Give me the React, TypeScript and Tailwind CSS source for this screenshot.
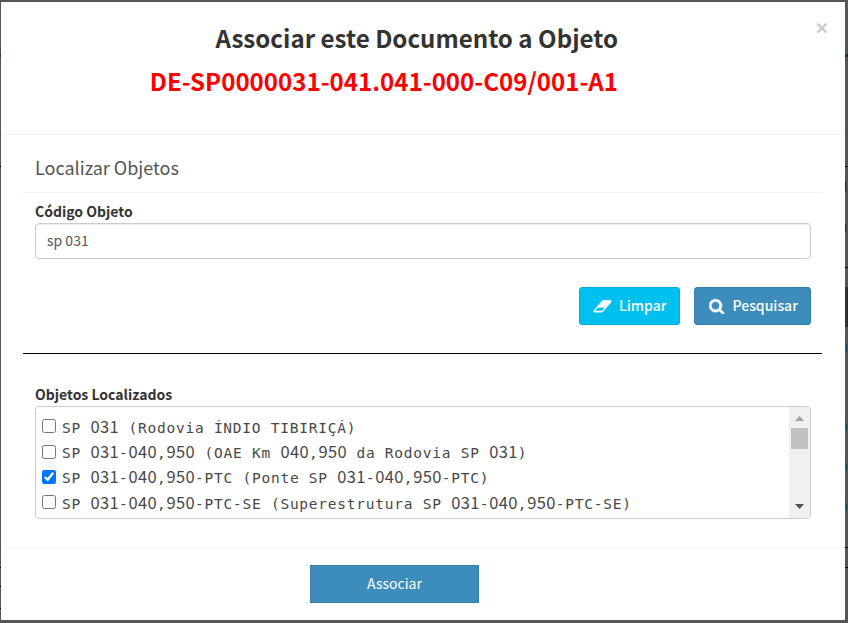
import React from "react";

type Objeto = { texto: string; marcado: boolean };

const objetos: Objeto[] = [
  { texto: "SP 031 (Rodovia ÍNDIO TIBIRIÇÁ)", marcado: false },
  { texto: "SP 031-040,950 (OAE Km 040,950 da Rodovia SP 031)", marcado: false },
  { texto: "SP 031-040,950-PTC (Ponte SP 031-040,950-PTC)", marcado: true },
  { texto: "SP 031-040,950-PTC-SE (Superestrutura SP 031-040,950-PTC-SE)", marcado: false },
];

/* Digits use a plain-zero face, spaced to the same pitch as the monospace letters. */
function TextoMono({ texto }: { texto: string }) {
  return (
    <span className="whitespace-pre font-['DejaVu_Sans_Mono',monospace] text-[14.5px] leading-[20px] tracking-[0.76px] text-[#484848]">
      {texto.split(/(\d+)/).map((parte, i) =>
        /^\d/.test(parte) ? (
          <span key={i} className="font-['Noto_Sans_CJK_SC',sans-serif] text-[16.5px] leading-[16px] tracking-[0.34px]">
            {parte}
          </span>
        ) : (
          parte
        )
      )}
    </span>
  );
}

function IconeBorracha() {
  return (
    <svg viewBox="0 0 2048 1792" className="h-[16.5px] w-[19px]" fill="currentColor" stroke="currentColor" strokeWidth="40">
      <path d="M960 1408l336-384h-768l-336 384h768zm1013-1077q15 34 9.5 71.5t-30.5 65.5l-896 1024q-38 44-96 44h-768q-38 0-69.5-20.5t-47.5-54.5q-15-34-9.5-71.5t30.5-65.5l896-1024q38-44 96-44h768q38 0 69.5 20.5t47.5 54.5z" />
    </svg>
  );
}

function IconeLupa() {
  return (
    <svg viewBox="0 0 1792 1792" className="size-[16.5px]" fill="currentColor" stroke="currentColor" strokeWidth="50">
      <path d="M1152 832q0-185-131.5-316.5t-316.5-131.5-316.5 131.5-131.5 316.5 131.5 316.5 316.5 131.5 316.5-131.5 131.5-316.5zm512 832q0 52-38 90t-90 38q-54 0-90-38l-343-342q-179 124-399 124-143 0-273.5-55.5t-225-150-150-225-55.5-273.5 55.5-273.5 150-225 225-150 273.5-55.5 273.5 55.5 225 150 150 225 55.5 273.5q0 220-124 399l343 343q37 37 37 90z" />
    </svg>
  );
}

function BarraRolagem() {
  return (
    <div className="flex w-[21px] flex-col items-center rounded-r-[3px] bg-[#f0f0f0]">
      <svg viewBox="0 0 9 5" className="mt-[9px] h-[5px] w-[9px] shrink-0" fill="#a3a3a3">
        <path d="M4.5 0L9 5H0z" />
      </svg>
      <div className="mt-[7px] h-[21px] w-[17px] bg-[#c1c1c1]" />
      <svg viewBox="0 0 9 5" className="mt-auto mb-[9px] h-[5px] w-[9px] shrink-0" fill="#505050">
        <path d="M0 0H9L4.5 5z" />
      </svg>
    </div>
  );
}

function BordaEsquerda() {
  return (
    <div className="w-px shrink-0">
      <div className="mt-[52px] h-[3px] bg-[#143c57]" />
      <div className="mt-[109px] h-px bg-black" />
      <div className="mt-[400px] h-px bg-black" />
      <div className="mt-[18px] h-px bg-black" />
      <div className="mt-[21px] h-px bg-black" />
    </div>
  );
}

function BordaDireita() {
  return (
    <div className="w-[3px] shrink-0 overflow-hidden">
      <div className="mt-[52px] h-[3px] bg-[#0c3a5c]" />
      <div className="mt-[109px] h-px bg-black" />
      <div className="mt-[14px] h-[11px] w-[2px] rounded-l-full border-l border-[#222]" />
      <div className="mt-[32px] h-[8px] w-[2px] rounded-l-full border-l border-[#222]" />
      <div className="mt-[35px] h-px bg-black" />
      <div className="mt-[19px] h-[40px] bg-[#303030]" />
      <div className="mt-[16px] h-[9px] w-[2px] rounded-r-full border-r border-[#143c57]" />
      <div className="mt-[71px] h-[8px] w-[2px] rounded-r-full border-r border-[#143c57]" />
      <div className="mt-[32px] h-[8px] w-[2px] rounded-r-full border-r border-[#143c57]" />
      <div className="mt-[32px] h-[8px] w-[2px] rounded-r-full border-r border-[#143c57]" />
      <div className="mt-[36px] h-px bg-black" />
      <div className="mt-[19px] h-px bg-black" />
    </div>
  );
}

export default function App() {
  return (
    <div className="flex h-[623px] w-[848px] overflow-hidden bg-[#555] pt-[2px] font-['Noto_Sans_CJK_SC',sans-serif] text-[#333]">
      <BordaEsquerda />
      <div className="flex h-[618px] w-[844px] flex-col bg-white">
        <header className="flex h-[133px] shrink-0 border-b border-[#f4f4f4]">
          <div className="w-[617px] pt-[14px] text-right text-[24.1px] leading-[43px] font-bold">
            <h4 className="whitespace-nowrap">Associar este Documento a Objeto</h4>
            <h4 className="whitespace-nowrap text-[#f00]">DE-SP0000031-041.041-000-C09/001-A1</h4>
          </div>
          <button className="mt-[14px] ml-auto mr-[17px] h-[24px] font-['Liberation_Sans',sans-serif] text-[21px] leading-[24px] font-bold text-[#ccc]">
            ×
          </button>
        </header>

        <main className="flex h-[412px] shrink-0 flex-col pr-[23px] pl-[22px]">
          <h3 className="h-[58px] shrink-0 border-b border-[#f1f1f1] pl-[12px] pt-[18px] text-[18px] leading-[28px] text-[#555]">
            Localizar Objetos
          </h3>
          <section className="flex flex-col pr-[11px] pl-[12px]">
            <label className="mt-[8px] h-[22px] text-[14px] leading-[20px] font-bold">Código Objeto</label>
            <div className="h-[36px] rounded-[4px] border border-[#ccc] pl-[11px] text-[14px] leading-[32px] text-[#555] shadow-[inset_0_1px_1px_rgba(0,0,0,0.075)]">
              sp 031
            </div>
            <div className="mt-[28px] flex justify-end gap-[14px] text-[14px] leading-[20px] text-white">
              <button className="flex h-[38px] w-[101px] items-center rounded-[3px] border border-[#00acd6] bg-[#00c0ef] pl-[13px]">
                <IconeBorracha />
                <span className="mb-[2px] ml-[7px] font-medium">Limpar</span>
              </button>
              <button className="flex h-[38px] w-[117px] items-center rounded-[3px] border border-[#367fa9] bg-[#3c8dbc] pl-[14px]">
                <IconeLupa />
                <span className="mb-[2px] ml-[7px] font-medium">Pesquisar</span>
              </button>
            </div>
          </section>
          <hr className="mt-[28px] border-black" />
          <section className="pr-[11px] pl-[12px]">
            <h5 className="mt-[30px] h-[22px] text-[14px] leading-[20px] font-bold">Objetos Localizados</h5>
            <div className="flex h-[113px] overflow-hidden rounded-[4px] border border-[#ccc]">
              <ul className="flex-1 pl-[6px] pt-[8px]">
                {objetos.map((o) => (
                  <li key={o.texto} className="flex h-[25.4px] items-center">
                    <input
                      type="checkbox"
                      defaultChecked={o.marcado}
                      className="mr-[6px] mb-[3px] size-[14px] shrink-0"
                    />
                    <TextoMono texto={o.texto} />
                  </li>
                ))}
              </ul>
              <BarraRolagem />
            </div>
          </section>
        </main>

        <footer className="h-[73px] border-t border-[#f4f4f4] pt-[17px] pl-[309px]">
          <button className="flex h-[38px] w-[169px] items-center justify-center border border-[#367fa9] bg-[#3c8dbc] pb-[2px] text-[14px] leading-[20px] text-white">
            Associar
          </button>
        </footer>
      </div>
      <BordaDireita />
    </div>
  );
}
